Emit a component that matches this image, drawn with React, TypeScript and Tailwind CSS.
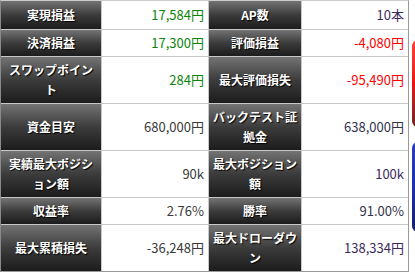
import React from "react";

type Cell = { label: string; value: string; color: string };

const rows: [Cell, Cell][] = [
  [
    { label: "実現損益", value: "17,584円", color: "text-[#0a850a]" },
    { label: "AP数", value: "10本", color: "text-[#3d2a5c]" },
  ],
  [
    { label: "決済損益", value: "17,300円", color: "text-[#0a850a]" },
    { label: "評価損益", value: "-4,080円", color: "text-[#ff0000]" },
  ],
  [
    { label: "スワップポイント", value: "284円", color: "text-[#0a850a]" },
    { label: "最大評価損失", value: "-95,490円", color: "text-[#ff0000]" },
  ],
  [
    { label: "資金目安", value: "680,000円", color: "text-[#3a3a3a]" },
    { label: "バックテスト証拠金", value: "638,000円", color: "text-[#33334a]" },
  ],
  [
    { label: "実績最大ポジション額", value: "90k", color: "text-[#3a3a3a]" },
    { label: "最大ポジション額", value: "100k", color: "text-[#3d2a5c]" },
  ],
  [
    { label: "収益率", value: "2.76%", color: "text-[#3a3a3a]" },
    { label: "勝率", value: "91.00%", color: "text-[#33334a]" },
  ],
  [
    { label: "最大累積損失", value: "-36,248円", color: "text-[#3a3a3a]" },
    { label: "最大ドローダウン", value: "138,334円", color: "text-[#3d2a5c]" },
  ],
];

function Header({ text, first }: { text: string; first: boolean }) {
  return (
    <div
      className={`flex items-center justify-center bg-linear-to-b from-[#747474] via-[#3c3c3c] to-[#1c1c1c] px-[3px] text-center text-[12px] font-bold leading-[20px] text-white [text-shadow:1px_1px_1px_#000] ${
        first ? "py-[4px]" : "py-[3px]"
      }`}
    >
      {text}
    </div>
  );
}

function Value({ text, color }: { text: string; color: string }) {
  return (
    <div className={`flex items-center justify-end bg-white px-[4px] py-[3px] text-[13px] leading-[20px] ${color}`}>
      {text}
    </div>
  );
}

export default function App() {
  return (
    <div
      className="flex h-[277px] w-[415px] items-start overflow-hidden bg-white"
      style={{ fontFamily: '"Noto Sans CJK JP", "Noto Sans", sans-serif' }}
    >
      <div className="grid w-[409px] shrink-0 grid-cols-[100px_106px_92px_106px] gap-px border-t border-l border-r border-b border-t-[#cccccc] border-l-[#8a8a8a] border-r-[#999999] border-b-[#999999] bg-[#c8c8c8]">
        {rows.map(([a, b], i) => (
          <React.Fragment key={i}>
            <Header text={a.label} first={i === 0} />
            <Value text={a.value} color={a.color} />
            <Header text={b.label} first={i === 0} />
            <Value text={b.value} color={b.color} />
          </React.Fragment>
        ))}
      </div>
      <div className="ml-[3px] flex shrink-0 flex-col pt-[40px]">
        <div className="h-[87px] w-[10px] rounded-l-[6px] bg-linear-to-b from-[#ff4040] via-[#ee1111] to-[#6a2020]" />
        <div className="mt-[15px] h-[90px] w-[10px] rounded-l-[6px] bg-linear-to-b from-[#2a40c0] via-[#1a30b0] to-[#15206a]" />
      </div>
    </div>
  );
}
